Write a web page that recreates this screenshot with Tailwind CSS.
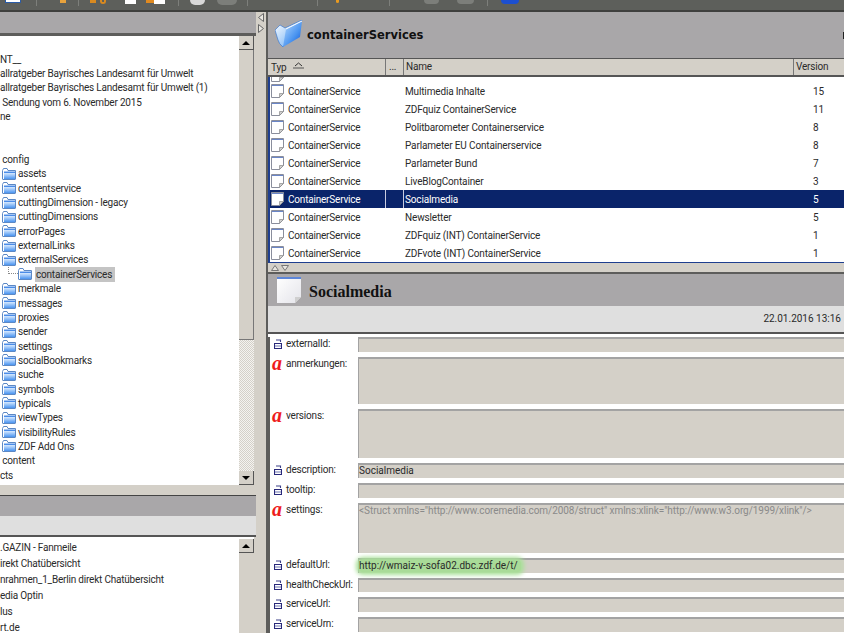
<!DOCTYPE html>
<html lang="de">
<head>
    <meta charset="UTF-8">
    <title>containerServices</title>
    <script src="https://cdn.jsdelivr.net/npm/@tailwindcss/browser@4"></script>
</head>
<body class="w-[844px] h-[633px] overflow-hidden bg-[#d4d0c8] font-['Roboto',sans-serif] text-[10px] tracking-[-0.2px] text-[#2a2a2a]">

    <!-- shared icons -->
    <svg width="0" height="0" class="absolute">
        <defs>
            <linearGradient id="fold" x1="0" y1="0" x2="0" y2="1"><stop offset="0" stop-color="#d8eaff"/><stop offset="1" stop-color="#4a94f0"/></linearGradient>
            <linearGradient id="bigfront" x1="0" y1="0" x2="1" y2="1"><stop offset="0" stop-color="#b8dcff"/><stop offset=".6" stop-color="#4a94f0"/><stop offset="1" stop-color="#0c50d0"/></linearGradient>
            <linearGradient id="bigback" x1="0" y1="0" x2="1" y2="1"><stop offset="0" stop-color="#ffffff"/><stop offset="1" stop-color="#5aa4f4"/></linearGradient>
            <linearGradient id="page" x1="0" y1="0" x2="1" y2="1"><stop offset="0" stop-color="#ffffff"/><stop offset="1" stop-color="#e4e4ea"/></linearGradient>
        </defs>
        <symbol id="folder" viewBox="0 0 14 12">
            <path d="M.5 2.500V11a.5.5 0 0 0 .5.5h12a.5.5 0 0 0 .5-.5V2.500H6L5 .5H1.500z" fill="#fff" stroke="#5c88c4"/>
            <path d="M2 5h11v6H2z" fill="url(#fold)"/>
            <path d="M2 3.500h11V5H2z" fill="#4a8ce8"/>
        </symbol>
        <symbol id="doc" viewBox="0 0 13 14">
            <path d="M.5.5h12v9l-4 4h-8z" fill="#fff" stroke="#8a8e9c"/>
            <path d="M1 1h11v1H1z" fill="#6a86c8"/>
            <path d="M8.500 13.500v-4h4z" fill="#d0d0d0" stroke="#8a8a8a" stroke-width=".7"/>
        </symbol>
        <symbol id="field" viewBox="0 0 8 10">
            <path d="M2 1h4.500v2" fill="none" stroke="#3c4088" stroke-width="1.100"/>
            <path d="M.5 4.500h7v5h-7z" fill="#fff" stroke="#28287a" stroke-width="1.100"/>
            <path d="M1 7h6" stroke="#6c74b0" stroke-width="1"/>
        </symbol>
    </svg>

    <!-- toolbar, only the lower edge of its buttons is in view -->
    <div class="h-[12px] bg-[#5d5f5b] border-b-2 border-[#3f403e] flex items-start overflow-hidden">
        <div class="ml-[5px] w-[16px] h-[3px] bg-white border-x border-b border-[#2a5ca8]"></div>
        <div class="ml-[15px] w-px h-[6px] bg-[#7d7f7b]"></div>
        <div class="ml-[23px] w-[6px] h-[3px] bg-[#e8a23c]"></div>
        <div class="ml-[12px] w-px h-[6px] bg-[#7d7f7b]"></div>
        <div class="ml-[11px] w-[6px] h-[3px] bg-[#d98a20]"></div>
        <div class="ml-[4px] w-[6px] h-[4px] rounded-b-full border-2 border-t-0 border-[#d98a20]"></div>
        <div class="ml-[19px] w-[11px] h-[4px] bg-white"></div>
        <div class="ml-[10px] w-[8px] h-[3px] bg-[#e08a20]"></div>
        <div class="w-[11px] h-[4px] bg-white"></div>
        <div class="ml-[13px] w-px h-[6px] bg-[#7d7f7b]"></div>
        <div class="ml-[11px] w-[15px] h-[5px] rounded-b-full bg-[#d8d8d8]"></div>
        <div class="ml-[12px] w-[20px] h-[5px] rounded-b-lg bg-[#7c7e7a]"></div>
        <div class="ml-[10px] w-px h-[6px] bg-[#7d7f7b]"></div>
        <div class="ml-[69px] w-px h-[6px] bg-[#7d7f7b]"></div>
        <div class="ml-[18px] w-[3px] h-[3px] rounded-b-full bg-[#e89a20]"></div>
        <div class="ml-[50px] w-px h-[6px] bg-[#7d7f7b]"></div>
        <div class="ml-[34px] w-[15px] h-[4px] rounded-b-full bg-[#7c7e7a]"></div>
        <div class="ml-[18px] w-[17px] h-[4px] rounded-b-full bg-[#7c7e7a]"></div>
        <div class="ml-[13px] w-px h-[6px] bg-[#7d7f7b]"></div>
        <div class="ml-[13px] w-[18px] h-[4px] rounded-b-full bg-[#1c4fd0]"></div>
    </div>

    <div class="flex h-[621px]">
        <!-- left column -->
        <div class="w-[256px] flex flex-col">
            <div class="h-[21px] bg-[#a9a7a9] border-b-[3px] border-[#5d5d5b] box-content"></div>
            <div class="h-[449px] flex border-r-2 border-[#d4d0c8]">
                <div id="tree" class="flex-1 bg-white overflow-hidden pt-[16px]"></div>
                <div class="w-[15px] flex flex-col bg-white">
                    <div class="h-[14px] bg-[#d4d0c8] border-r border-b border-[#555] flex items-center justify-center">
                        <div class="w-0 h-0 border-x-[4px] border-x-transparent border-b-[4px] border-b-black"></div>
                    </div>
                    <div class="h-[290px] bg-[#d4d0c8] border-r border-b border-[#777]"></div>
                    <div class="flex-1 bg-[repeating-conic-gradient(#d4d0c8_0_25%,#f4f3f0_0_50%)] bg-[length:2px_2px]"></div>
                    <div class="h-[14px] bg-[#d4d0c8] border-r border-b border-[#555] flex items-center justify-center">
                        <div class="w-0 h-0 border-x-[4px] border-x-transparent border-t-[4px] border-t-black"></div>
                    </div>
                </div>
            </div>
            <div class="h-[11px] bg-[#d4d0c8] border-b border-[#444]"></div>
            <div class="h-[20px] bg-[#a9a7a9]"></div>
            <div class="h-[21px] bg-[#dfdfdf] border-b-2 border-[#555]"></div>
            <div class="flex-1 flex overflow-hidden">
                <div class="flex-1 bg-white pt-[3px]">
                    <div class="h-[16px] leading-[16px]">.GAZIN - Fanmeile</div>
                    <div class="h-[16px] leading-[16px]">irekt Chatübersicht</div>
                    <div class="h-[16px] leading-[16px]">nrahmen_1_Berlin direkt Chatübersicht</div>
                    <div class="h-[16px] leading-[16px]">edia Optin</div>
                    <div class="h-[16px] leading-[16px]">lus</div>
                    <div class="h-[16px] leading-[16px]">rt.de</div>
                </div>
                <div class="w-[17px] bg-white border-r-2 border-[#d4d0c8] flex flex-col">
                    <div class="mt-[2px] h-[14px] bg-[#d4d0c8] border-r border-b border-[#555] flex items-center justify-center">
                        <div class="w-0 h-0 border-x-[4px] border-x-transparent border-b-[4px] border-b-black"></div>
                    </div>
                    <div class="flex-1 bg-[#d4d0c8]"></div>
                </div>
            </div>
        </div>

        <!-- vertical splitter -->
        <div class="w-[10px] pl-[2px] pt-[1px] flex flex-col gap-[2px]">
            <svg width="6" height="9" viewBox="0 0 6 9"><path d="M5.500.5v8L.5 4.500z" fill="#e8e6e0" stroke="#666"/></svg>
            <svg width="6" height="9" viewBox="0 0 6 9"><path d="M.5.5v8l5-4z" fill="#e8e6e0" stroke="#666"/></svg>
        </div>

        <!-- right column -->
        <div class="flex-1 min-w-0 flex flex-col border-l-2 border-[#5d5d5b]">
            <div class="h-[46px] bg-[#a9a7a9] flex items-center pl-[7px] shrink-0">
                <svg width="28" height="28" viewBox="0 0 28 28" class="mb-[3px]">
                    <path d="M0 10 5 5l5 3L27 0 8 27Q4 24 3 20z" fill="url(#bigback)" stroke="#2a6fd0" stroke-width=".6"/>
                    <path d="M11 9 27 1l-2 16-17 10z" fill="url(#bigfront)"/>
                    <path d="M11 9 27 1" stroke="#fff" stroke-width="1"/>
                </svg>
                <span class="ml-[4px] mt-[2px] font-['DejaVu_Sans',sans-serif] font-bold text-[11.500px] tracking-normal text-[#111]">containerServices</span>
                <div class="ml-auto w-px h-[7px] bg-[#222]"></div>
            </div>
            <div class="h-[19px] bg-[#d4d0c8] border-b-2 border-t border-[#555] flex shrink-0 leading-[15px]">
                <div class="w-[118px] border-r border-[#777] pl-[3px] flex items-center gap-[7px]">Typ
                    <svg width="11" height="7" viewBox="0 0 11 7" class="mb-[3px]"><path d="M2 4 5.500 1 9 4" fill="none" stroke="#333"/><path d="M0 6h11" stroke="#555"/></svg>
                </div>
                <div class="w-[18px] border-r border-[#777] pl-[3px]">...</div>
                <div class="w-[390px] border-r border-[#777] pl-[2px]">Name</div>
                <div class="pl-[2px]">Version</div>
            </div>
            <div id="table" class="h-[186px] bg-white border-l-2 border-b border-[#1f3f8f] overflow-hidden shrink-0"></div>
            <div class="h-[9px] bg-[#d4d0c8] flex items-end gap-[2px] pl-[3px] pb-px shrink-0">
                <svg width="8" height="6" viewBox="0 0 8 6"><path d="M.5 5.500h7l-3.500-5z" fill="#e8e6e0" stroke="#777"/></svg>
                <svg width="8" height="6" viewBox="0 0 8 6"><path d="M.5.5h7l-3.500 5z" fill="#e8e6e0" stroke="#777"/></svg>
            </div>
            <div class="h-[34px] bg-[#a9a7a9] border-t-2 border-[#5d5d5b] flex items-center pl-[8px] shrink-0">
                <svg width="26" height="28" viewBox="0 0 26 28">
                    <path d="M1 1h24v20l-6 6H1z" fill="url(#page)"/>
                    <path d="M1 1h24v2H1z" fill="#5d86d8"/>
                    <path d="M19 27v-6h6z" fill="#cfcfcf"/>
                </svg>
                <span class="ml-[7px] mt-[3px] font-['Liberation_Serif',serif] font-bold text-[16px] tracking-normal text-[#111]">Socialmedia</span>
            </div>
            <div class="h-[28px] bg-[#dfdfdf] border-b-2 border-[#555] flex items-center justify-end pr-[3px] pb-[1px] tracking-normal shrink-0">22.01.2016 13:16</div>
            <div class="h-[3px] bg-white shrink-0"></div>
            <div id="form" class="flex-1 bg-white border-l-2 border-[#5d5d5b] flex flex-col gap-[5px]"></div>
        </div>
    </div>

    <script>
        const folder = '<svg width="14" height="12" class="shrink-0"><use href="#folder"/></svg>';

        // left tree, lvl: 0 plain text, 1 folder, 2 nested folder
        const treeRows = [
            ['NT__', 0], ['allratgeber Bayrisches Landesamt für Umwelt', 0], ['allratgeber Bayrisches Landesamt für Umwelt (1)', 0],
            [' Sendung vom 6. November 2015', 0], ['ne', 0], ['', 0], ['', 0], [' config', 0],
            ['assets', 1], ['contentservice', 1], ['cuttingDimension - legacy', 1], ['cuttingDimensions', 1],
            ['errorPages', 1], ['externalLinks', 1], ['externalServices', 1], ['containerServices', 2],
            ['merkmale', 1], ['messages', 1], ['proxies', 1], ['sender', 1], ['settings', 1], ['socialBookmarks', 1],
            ['suche', 1], ['symbols', 1], ['typicals', 1], ['viewTypes', 1], ['visibilityRules', 1], ['ZDF Add Ons', 1],
            [' content', 0], ['cts', 0]
        ];
        document.getElementById('tree').innerHTML = treeRows.map(([name, lvl]) => {
            if (lvl === 1) return `<div class="h-[14.350px] flex items-center pl-[2px] gap-[2px] whitespace-nowrap">${folder}<span>${name}</span></div>`;
            if (lvl === 2) return `<div class="h-[14.350px] flex items-center pl-[8px] whitespace-nowrap">
                <div class="w-[10px] h-[7px] mb-[7px] border-l border-b border-dotted border-[#888]"></div>${folder}
                <span class="ml-[3px] pl-px pr-[3px] bg-[#c4c4c4] leading-[15px]">${name}</span></div>`;
            return `<div class="h-[14.350px] flex items-center whitespace-pre">${name}</div>`;
        }).join('');

        const tableRows = [
            ['Multimedia Inhalte', 15], ['ZDFquiz ContainerService', 11], ['Politbarometer Containerservice', 8],
            ['Parlameter EU Containerservice', 8], ['Parlameter Bund', 7], ['LiveBlogContainer', 3],
            ['Socialmedia', 5], ['Newsletter', 5], ['ZDFquiz (INT) ContainerService', 1], ['ZDFvote (INT) ContainerService', 1]
        ];
        document.getElementById('table').innerHTML =
            '<div class="h-[5px] overflow-hidden pl-[1px]"><svg width="13" height="14" class="-mt-[9px]"><use href="#doc"/></svg></div>' +
            tableRows.map(([name, ver]) => {
                const sel = name === 'Socialmedia';
                const rowCls = sel ? 'bg-[#0a246a] text-white' : '';
                const sep = sel ? 'border-r border-[#c8cce0]' : '';
                return `<div class="h-[18px] flex items-center ${rowCls}">
                    <div class="w-[116px] h-full flex items-center pl-[1px] ${sep}"><svg width="13" height="14" class="shrink-0"><use href="#doc"/></svg><span class="ml-[4px]">ContainerService</span></div>
                    <div class="w-[18px] h-full ${sep}"></div>
                    <div class="w-[409px] pl-[1px] tracking-[-0.15px]">${name}</div>
                    <div>${ver}</div>
                </div>`;
            }).join('');

        // h is the field height, red marks the text-block properties
        const fields = [
            ['externalId', 15], ['anmerkungen', 47, true], ['versions', 49, true],
            ['description', 15, false, 'Socialmedia'], ['tooltip', 15],
            ['settings', 50, true, '<Struct xmlns="http://www.coremedia.com/2008/struct" xmlns:xlink="http://www.w3.org/1999/xlink"/>'],
            ['defaultUrl', 15, false, 'http://wmaiz-v-sofa02.dbc.zdf.de/t/'],
            ['healthCheckUrl', 14], ['serviceUrl', 15], ['serviceUrn', 15]
        ];
        const esc = s => s.replace(/</g, '&lt;');
        document.getElementById('form').innerHTML = fields.map(([label, h, red, val]) => {
            const icon = red
                ? '<span class="w-[11px] font-[\'Liberation_Serif\',serif] italic font-bold text-[20px] leading-[13px] tracking-normal text-[#ee1c1c]">a</span>'
                : '<svg width="8" height="10" class="ml-[2px] mr-[1px] mt-[2px]"><use href="#field"/></svg>';
            let content = '';
            if (label === 'defaultUrl') content = `<span class="inline-block leading-[12px] pr-[3px] bg-[#a9db98] rounded-sm shadow-[0_0_4px_3px_#a9e099]">${val}</span>`;
            else if (label === 'settings') content = `<span class="text-[#8a8a8a] tracking-[-0.05px]">${esc(val)}</span>`;
            else if (val) content = val;
            return `<div class="flex items-start pl-[2px]">
                <div class="w-[86px] flex items-start gap-[3px]">${icon}<span class="leading-[14px]">${label}:</span></div>
                <div style="height:${h}px" class="flex-1 bg-[#d4d0c8] border-t-2 border-l border-[#a3a3a3] leading-[12px] tracking-normal whitespace-nowrap">${content}</div>
            </div>`;
        }).join('');
    </script>
</body>
</html>
